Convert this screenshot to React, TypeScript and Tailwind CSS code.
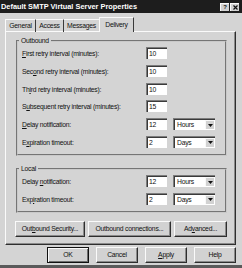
import type { ReactNode } from "react";

const font = "font-['Liberation_Sans',Arial,sans-serif]";

function U({ children }: { children: ReactNode }) {
  return <span className="underline underline-offset-1">{children}</span>;
}

function TextBox({ value }: { value: string }) {
  return (
    <div className="w-[21px] h-[12px] bg-white border-t border-l border-[#7c7c7c] border-b-[#f4f4f4] border-r-[#f4f4f4] shadow-[inset_1px_1px_0_#3a3a3a] pl-[2px] leading-[11px]">
      {value}
    </div>
  );
}

function Combo({ value }: { value: string }) {
  return (
    <div className="w-[42px] h-[12px] flex bg-white border-t border-l border-[#7c7c7c] border-b-[#f4f4f4] border-r-[#f4f4f4] shadow-[inset_1px_1px_0_#3a3a3a]">
      <span className="flex-1 pl-[3px] leading-[11px]">{value}</span>
      <span className="w-[9px] h-[9px] mt-[1px] mr-[1px] bg-[#d2d2d2] border-t border-l border-[#f8f8f8] border-r-[#3a3a3a] border-b-[#3a3a3a] flex items-center justify-center">
        <svg width="5" height="3" viewBox="0 0 5 3">
          <path d="M0 0h5L2.5 3z" fill="#111" />
        </svg>
      </span>
    </div>
  );
}

function Row({ label, value, unit }: { label: ReactNode; value: string; unit?: string }) {
  return (
    <div className="flex items-center h-[12px]">
      <div className="w-[128px] pl-[4px] pt-[2px] leading-[12px] whitespace-nowrap">{label}</div>
      <TextBox value={value} />
      {unit ? (
        <div className="ml-[6px]">
          <Combo value={unit} />
        </div>
      ) : null}
    </div>
  );
}

function Button({ children, width, isDefault }: { children: ReactNode; width: string; isDefault?: boolean }) {
  return (
    <div
      className={`${width} h-[16px] flex items-center justify-center bg-[#d2d2d2] whitespace-nowrap ${
        isDefault
          ? "border border-[#111] shadow-[inset_1px_1px_0_#fafafa,inset_-1px_-1px_0_#6e6e6e]"
          : "border border-t-[#fafafa] border-l-[#fafafa] border-r-[#2e2e2e] border-b-[#2e2e2e] shadow-[inset_-1px_-1px_0_#8a8a8a]"
      }`}
    >
      {children}
    </div>
  );
}

function Group({ title, children, className }: { title: string; children: ReactNode; className: string }) {
  return (
    <fieldset
      className={`ml-[10px] mr-[8px] border-2 [border-style:groove] border-[#c9c9c9] pt-[2px] pb-[3px] flex flex-col gap-[5.8px] ${className}`}
    >
      <legend className="ml-[1px] px-[2px] leading-[9px]">{title}</legend>
      {children}
    </fieldset>
  );
}

export default function App() {
  return (
    <div
      className={`w-[242px] h-[268px] bg-[#d4d4d4] text-[6.8px] tracking-[-0.25px] text-[#111] ${font} flex flex-col overflow-hidden`}
    >
      <div className="h-[13px] bg-[#1d1d1d] flex items-center justify-between pl-[1px] pr-[3px] shrink-0">
        <span className="font-bold text-white text-[7.4px] tracking-normal leading-[13px]">
          Default SMTP Virtual Server Properties
        </span>
        <div className="flex gap-[1px]">
          <span className="w-[9px] h-[8px] bg-[#d2d2d2] border-t border-l border-[#fafafa] border-r-[#2e2e2e] border-b-[#2e2e2e] flex items-center justify-center font-bold text-[6px] leading-none">
            ?
          </span>
          <span className="w-[9px] h-[8px] bg-[#d2d2d2] border-t border-l border-[#fafafa] border-r-[#2e2e2e] border-b-[#2e2e2e] flex items-center justify-center">
            <svg width="5" height="5" viewBox="0 0 5 5">
              <path d="M0.5 0.5l4 4M4.5 0.5l-4 4" stroke="#111" strokeWidth="1.2" />
            </svg>
          </span>
        </div>
      </div>

      <div className="flex items-end pl-[5px] h-[17px] mt-[1px]">
        <div className="flex items-end h-[13px] relative top-[1px]">
          <div className="w-[31px] h-[13px] flex items-center justify-center border-t border-l border-[#fafafa] border-r border-r-[#3a3a3a] rounded-tl-[1px]">
            General
          </div>
          <div className="w-[28px] h-[13px] flex items-center justify-center border-t border-[#fafafa] border-r border-r-[#3a3a3a]">
            Access
          </div>
          <div className="w-[36px] h-[13px] flex items-center justify-center border-t border-[#fafafa] border-r border-r-[#3a3a3a]">
            Messages
          </div>
        </div>
        <div className="w-[35px] h-[15px] -ml-[1px] flex items-center justify-center bg-[#d4d4d4] border-t border-l border-[#fafafa] border-r border-r-[#3a3a3a] relative top-[1px] z-10">
          Delivery
        </div>
      </div>

      <div className="ml-[5px] w-[231px] h-[214px] border border-t-[#fafafa] border-l-[#fafafa] border-r-[#2e2e2e] border-b-[#2e2e2e] shadow-[inset_-1px_-1px_0_#8a8a8a] flex flex-col">
        <Group title="Outbound" className="mt-[4px] h-[120px]">
          <Row label={<><U>F</U>irst retry interval (minutes):</>} value="10" />
          <Row label={<>Sec<U>o</U>nd retry interval (minutes):</>} value="10" />
          <Row label={<>Th<U>i</U>rd retry interval (minutes):</>} value="10" />
          <Row label={<>S<U>u</U>bsequent retry interval (minutes):</>} value="15" />
          <Row label={<><U>D</U>elay notification:</>} value="12" unit="Hours" />
          <Row label={<>E<U>x</U>piration timeout:</>} value="2" unit="Days" />
        </Group>
        <Group title="Local" className="mt-[8px] h-[49px]">
          <Row label={<>Delay <U>n</U>otification:</>} value="12" unit="Hours" />
          <Row label={<>Exp<U>i</U>ration timeout:</>} value="2" unit="Days" />
        </Group>
        <div className="flex gap-[3px] ml-[9px] mt-[8px]">
          <Button width="w-[70px]">
            <span>
              Out<U>b</U>ound Security...
            </span>
          </Button>
          <Button width="w-[83px]">Outbound connections...</Button>
          <Button width="w-[53px]">
            <span>
              Ad<U>v</U>anced...
            </span>
          </Button>
        </div>
      </div>

      <div className="flex justify-end gap-[7px] pr-[6px] mt-[2px]">
        <Button width="w-[42px]" isDefault>
          OK
        </Button>
        <Button width="w-[42px]">Cancel</Button>
        <Button width="w-[42px]">
          <span>
            <U>A</U>pply
          </span>
        </Button>
        <Button width="w-[42px]">Help</Button>
      </div>
      <div className="flex-1" />
      <div className="h-[3px] bg-[#5a5a5a]" />
    </div>
  );
}
